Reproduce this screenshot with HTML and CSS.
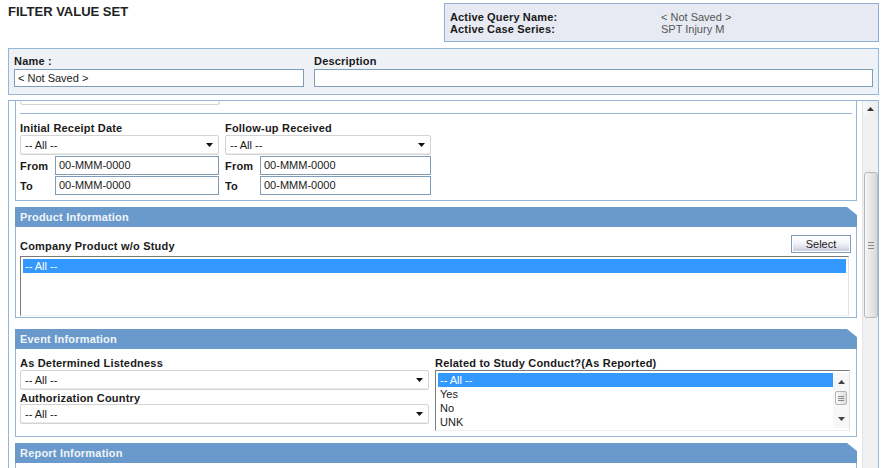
FILE: index.html
```html
<!DOCTYPE html>
<html>
<head>
<meta charset="utf-8">
<title>Filter Value Set</title>
<link rel="stylesheet" href="styles.css">
</head>
<body>
<div class="page">
  <div class="top">
    <h1 class="title">FILTER VALUE SET</h1>
    <div class="query">
      <div class="qrow"><span class="qlabel">Active Query Name:</span><span class="qval">&lt; Not Saved &gt;</span></div>
      <div class="qrow"><span class="qlabel">Active Case Series:</span><span class="qval">SPT Injury M</span></div>
    </div>
  </div>

  <div class="namepanel">
    <div class="field name">
      <label>Name :</label>
      <div class="input">&lt; Not Saved &gt;</div>
    </div>
    <div class="field desc">
      <label>Description</label>
      <div class="input"></div>
    </div>
  </div>

  <div class="scroller">
    <div class="content">
      <section class="sec dates">
        <div class="remnant"></div>
        <div class="sep"></div>
        <div class="dategrid">
          <div class="dcol dcol1">
            <div class="lbl">Initial Receipt Date</div>
            <div class="sel"><span>-- All --</span><svg class="arr" width="7" height="4" viewBox="0 0 7 4"><path d="M0 0H7L3.5 4Z" fill="#111"/></svg></div>
            <div class="drow"><span class="dl">From</span><div class="input">00-MMM-0000</div></div>
            <div class="drow"><span class="dl">To</span><div class="input">00-MMM-0000</div></div>
          </div>
          <div class="dcol dcol2">
            <div class="lbl">Follow-up Received</div>
            <div class="sel"><span>-- All --</span><svg class="arr" width="7" height="4" viewBox="0 0 7 4"><path d="M0 0H7L3.5 4Z" fill="#111"/></svg></div>
            <div class="drow"><span class="dl">From</span><div class="input">00-MMM-0000</div></div>
            <div class="drow"><span class="dl">To</span><div class="input">00-MMM-0000</div></div>
          </div>
        </div>
      </section>

      <section class="sec product">
        <div class="hdr">Product Information</div>
        <div class="body pbody">
          <div class="prow">
            <div class="plabel">Company Product w/o Study</div>
            <div class="btn">Select</div>
          </div>
          <div class="listbox plist">
            <div class="opt on">-- All --</div>
          </div>
        </div>
      </section>

      <section class="sec event">
        <div class="hdr">Event Information</div>
        <div class="body ebody">
          <div class="ecol eleft">
            <div class="lbl">As Determined Listedness</div>
            <div class="sel"><span>-- All --</span><svg class="arr" width="7" height="4" viewBox="0 0 7 4"><path d="M0 0H7L3.5 4Z" fill="#111"/></svg></div>
            <div class="lbl lbl2">Authorization Country</div>
            <div class="sel"><span>-- All --</span><svg class="arr" width="7" height="4" viewBox="0 0 7 4"><path d="M0 0H7L3.5 4Z" fill="#111"/></svg></div>
          </div>
          <div class="ecol eright">
            <div class="lbl">Related to Study Conduct?(As Reported)</div>
            <div class="listbox elist">
              <div class="opts">
                <div class="opt on">-- All --</div>
                <div class="opt">Yes</div>
                <div class="opt">No</div>
                <div class="opt">UNK</div>
              </div>
              <div class="miniscroll">
                <svg class="mup" width="7" height="4" viewBox="0 0 7 4"><path d="M0 4H7L3.5 0Z" fill="#444"/></svg>
                <div class="mthumb"><i></i><i></i><i></i></div>
                <svg class="mdown" width="7" height="4" viewBox="0 0 7 4"><path d="M0 0H7L3.5 4Z" fill="#444"/></svg>
              </div>
            </div>
          </div>
        </div>
      </section>

      <section class="sec report">
        <div class="hdr">Report Information</div>
        <div class="body rbody"></div>
      </section>
    </div>

    <div class="vscroll">
      <div class="vup"><svg width="7" height="4" viewBox="0 0 7 4"><path d="M0 4H7L3.5 0Z" fill="#333"/></svg></div>
      <div class="vthumb"><i></i><i></i><i></i></div>
    </div>
  </div>
</div>
</body>
</html>
```
FILE: styles.css
```css
* { box-sizing: border-box; }
html, body { margin: 0; padding: 0; background: #fff; }
body {
  font-family: "Liberation Sans", Arial, sans-serif;
  font-size: 11px;
  color: #1a1a1a;
  height: 468px;
  overflow: hidden;
}
.page { width: 871px; margin-left: 8px; }

.top { display: flex; justify-content: space-between; align-items: flex-start; height: 41px; }
.title { margin: 0; padding-top: 4px; font-size: 13px; line-height: 15px; font-weight: bold; color: #222; }
.query {
  margin-top: 3px; width: 435px; height: 39px;
  background: #e7eaf3; border: 1px solid #8fb0d2;
  padding: 7px 0 0 5px;
}
.qrow { display: flex; line-height: 12px; }
.qlabel { width: 211px; font-weight: bold; color: #1a1a1a; letter-spacing: 0.15px; }
.qval { color: #555; }

.namepanel {
  margin-top: 7px; height: 47px;
  border: 1px solid #93b6d9; background: #eef2f7;
  display: flex; gap: 10px; padding: 6px 5px 0 5px;
}
.field { display: flex; flex-direction: column; }
.field label { font-weight: bold; line-height: 12px; height: 14px; letter-spacing: 0.2px; }
.field.name { width: 290px; }
.field.desc { flex: 1; }
.input {
  height: 18px; border: 1px solid #7f9db9; background: #fff;
  padding-left: 3px; line-height: 16px; color: #1a1a1a;
}

.scroller {
  margin-top: 5px; height: 380px;
  border: 1px solid #93b6d9; border-bottom: none;
  display: flex;
}
.content { flex: 1; padding-left: 6px; overflow: hidden; }
.sec { width: 842px; }

.dates { border: 1px solid #93b6d9; border-top: none; padding: 0 4px 5px 4px; }
.remnant { width: 200px; height: 4px; border: 1px solid #d4d4d4; border-top: none; border-radius: 0 0 3px 3px; }
.sep { height: 1px; background: #93b6d9; margin-top: 8px; }
.dategrid { display: flex; gap: 6px; margin-top: 8px; }
.dcol1 { width: 199px; }
.dcol2 { width: 206px; }
.lbl { font-weight: bold; line-height: 12px; height: 13px; letter-spacing: 0.2px; white-space: nowrap; }
.sel {
  height: 20px; border: 1px solid #d3d3d3; border-radius: 2px; background: #fff;
  display: flex; align-items: center; justify-content: space-between;
  padding: 0 5px 0 4px; box-shadow: inset 0 -1px 0 #ececec;
}
.drow { display: flex; align-items: center; margin-top: 1px; height: 19px; }
.drow .dl { width: 35px; font-weight: bold; letter-spacing: 0.2px; }
.drow .input { flex: 1; height: 19px; line-height: 17px; }

.hdr {
  height: 20px; background: #6a9acb; color: #eef4fa;
  font-weight: bold; line-height: 20px; padding-left: 5px; letter-spacing: 0.2px;
  clip-path: polygon(0 0, calc(100% - 10px) 0, 100% 8px, 100% 100%, 0 100%);
}
.body { border: 1px solid #93b6d9; border-top: none; padding: 0 4px; }

.product { margin-top: 6px; }
.pbody { padding-top: 8px; padding-bottom: 1px; }
.prow { display: flex; justify-content: space-between; align-items: flex-end; }
.plabel { font-weight: bold; line-height: 14px; letter-spacing: 0.2px; }
.btn {
  width: 60px; height: 18px; margin-right: 1px;
  border: 1px solid #7f9db9;
  background: linear-gradient(#ffffff, #f4f4f8 45%, #c8c8dc);
  box-shadow: inset 0 0 0 1px #fff;
  text-align: center; line-height: 16px; color: #222;
}
.listbox {
  border: 1px solid; border-color: #7a7a7a #e2e2e2 #efefef #7a7a7a;
  background: #fff; padding: 2px;
}
.plist { margin-top: 3px; height: 60px; width: 829px; }
.opt { height: 14px; line-height: 14px; padding-left: 2px; color: #1a1a1a; }
.opt.on { background: #3399ff; color: #fff; }

.event { margin-top: 11px; }
.ebody { display: flex; gap: 6px; padding-top: 8px; padding-bottom: 5px; }
.eleft { width: 409px; }
.eright { width: 415px; }
.lbl2 { margin-top: 2px; height: 12px; }
.elist { height: 61px; display: flex; padding: 2px 0 2px 2px; }
.opts { flex: 1; }
.miniscroll {
  width: 16px; display: flex; flex-direction: column; align-items: center;
  background: #f7f7f7; padding-top: 7px;
}
.mup { display: block; }
.mthumb {
  margin-top: 7px; width: 12px; height: 14px;
  border: 1px solid #b4b4b4; border-radius: 2px;
  background: linear-gradient(90deg, #fafafa, #dcdcdc);
  display: flex; flex-direction: column; align-items: center; justify-content: center; gap: 1px;
}
.mthumb i, .vthumb i { display: block; width: 6px; height: 1px; background: #8a8a8a; }
.mdown { display: block; margin-top: 12px; }

.report { margin-top: 6px; }
.rbody { height: 40px; }

.vscroll {
  width: 16px; background: #f0f0f0; border-left: 1px solid #e6e6e6;
  display: flex; flex-direction: column; align-items: center;
}
.vup { height: 16px; width: 100%; display: flex; align-items: center; justify-content: center; background: linear-gradient(90deg, #f7f7f7, #ececec); }
.vthumb {
  margin-top: 55px; width: 14px; height: 146px;
  border: 1px solid #b8b8b8; border-radius: 3px;
  background: linear-gradient(90deg, #f6f6f6, #d8d8d8);
  display: flex; flex-direction: column; align-items: center; justify-content: center; gap: 2px;
}
```
